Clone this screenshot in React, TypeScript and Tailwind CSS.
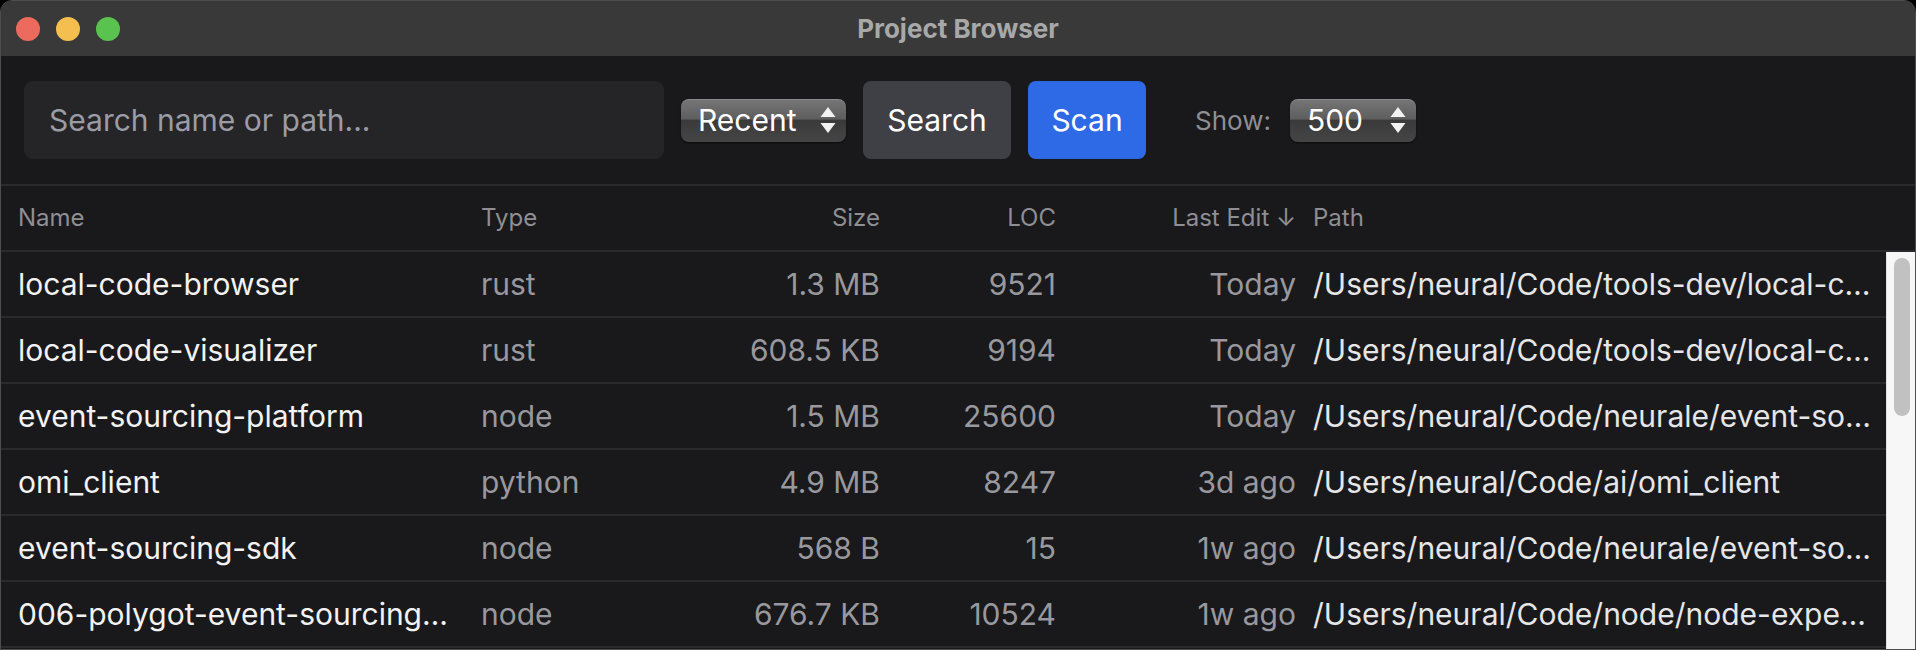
import React from 'react';

type Project = {
  name: string;
  type: string;
  size: string;
  loc: string;
  edited: string;
  path: string;
};

const projects: Project[] = [
  { name: 'local-code-browser', type: 'rust', size: '1.3 MB', loc: '9521', edited: 'Today', path: '/Users/neural/Code/tools-dev/local-code-browser' },
  { name: 'local-code-visualizer', type: 'rust', size: '608.5 KB', loc: '9194', edited: 'Today', path: '/Users/neural/Code/tools-dev/local-code-visualizer' },
  { name: 'event-sourcing-platform', type: 'node', size: '1.5 MB', loc: '25600', edited: 'Today', path: '/Users/neural/Code/neurale/event-sourcing-platform' },
  { name: 'omi_client', type: 'python', size: '4.9 MB', loc: '8247', edited: '3d ago', path: '/Users/neural/Code/ai/omi_client' },
  { name: 'event-sourcing-sdk', type: 'node', size: '568 B', loc: '15', edited: '1w ago', path: '/Users/neural/Code/neurale/event-sourcing-sdk' },
  { name: '006-polygot-event-sourcing-demo', type: 'node', size: '676.7 KB', loc: '10524', edited: '1w ago', path: '/Users/neural/Code/node/node-experiments/006-polygot-event-sourcing-demo' },
  { name: 'dotfiles', type: 'shell', size: '212 KB', loc: '1830', edited: '2w ago', path: '/Users/neural/Code/dotfiles' },
];

const cols = 'grid grid-cols-[446px_232px_150px_159px_223px_558px] gap-x-[17px] px-[17px] items-center';

const Arrows = () => (
  <svg width="16" height="26" viewBox="0 0 16 26" className="shrink-0">
    <path d="M8 0 L15.5 10 L0.5 10 Z" fill="#f2f2f2" />
    <path d="M8 26 L15.5 16 L0.5 16 Z" fill="#f2f2f2" />
  </svg>
);

const PopupSelect: React.FC<{ label: string; width: string }> = ({ label, width }) => (
  <div
    className={`${width} h-[43px] rounded-[8px] flex items-center justify-between pl-[17px] pr-[10px] text-[30px] text-white bg-[linear-gradient(180deg,#767676_0%,#5e5e5e_46%,#3a3a3a_50%,#454545_100%)] shadow-[inset_0_1px_0_rgba(255,255,255,0.15),0_1px_2px_rgba(0,0,0,0.6)]`}
  >
    <span className="leading-none">{label}</span>
    <Arrows />
  </div>
);

export default function App() {
  return (
    <div className="h-[650px] w-full bg-black overflow-hidden font-['Inter',sans-serif]">
      <div className="h-full flex flex-col rounded-t-[12px] border border-[#4d4d4f] overflow-hidden bg-[#19191b]">
        {/* Title bar */}
        <div className="h-[55px] shrink-0 bg-[#393939] relative flex items-center">
          <div className="flex items-center gap-[16px] pl-[15px]">
            <span className="w-[24px] h-[24px] rounded-full bg-[#ed6a5e]" />
            <span className="w-[24px] h-[24px] rounded-full bg-[#f5bf4f]" />
            <span className="w-[24px] h-[24px] rounded-full bg-[#5ac34f]" />
          </div>
          <div className="absolute inset-0 flex items-center justify-center text-[26px] font-bold text-[#a8a8a8] pointer-events-none">
            Project Browser
          </div>
        </div>

        {/* Toolbar */}
        <div className="h-[130px] shrink-0 flex items-center px-[23px] border-b-2 border-[#2a2a2c]">
          <div className="w-[640px] h-[78px] rounded-[9px] bg-[#252528] flex items-center px-[25px] text-[30px] text-[#9a9ca6]">
            Search name or path...
          </div>
          <div className="ml-[17px]">
            <PopupSelect label="Recent" width="w-[165px]" />
          </div>
          <button className="ml-[17px] w-[148px] h-[78px] rounded-[8px] bg-[#3f4046] text-[30px] text-white">Search</button>
          <button className="ml-[17px] w-[118px] h-[78px] rounded-[8px] bg-[#2f6ae6] text-[30px] text-white">Scan</button>
          <span className="ml-[49px] text-[26px] text-[#8e8e93]">Show:</span>
          <div className="ml-[19px]">
            <PopupSelect label="500" width="w-[126px]" />
          </div>
        </div>

        {/* Header */}
        <div className={`${cols} h-[66px] shrink-0 border-b-2 border-[#2a2a2c] text-[24px] text-[#8e8e93]`}>
          <div>Name</div>
          <div>Type</div>
          <div className="text-right">Size</div>
          <div className="text-right">LOC</div>
          <div className="text-right">Last Edit ↓</div>
          <div>Path</div>
        </div>

        {/* Rows + scrollbar */}
        <div className="flex flex-1 min-h-0">
          <div className="flex-1 min-w-0">
            {projects.map((p) => (
              <div key={p.name} className={`${cols} h-[66px] border-b-2 border-[#2a2a2c] text-[30px]`}>
                <div className="min-w-0 pr-[8px]">
                  <div className="truncate text-[#f2f2f2]">{p.name}</div>
                </div>
                <div className="text-[#98989e]">{p.type}</div>
                <div className="text-right text-[#98989e]">{p.size}</div>
                <div className="text-right text-[#98989e]">{p.loc}</div>
                <div className="text-right text-[#98989e]">{p.edited}</div>
                <div className="truncate text-[#e6e6e8]">{p.path}</div>
              </div>
            ))}
          </div>
          <div className="w-[29px] shrink-0 bg-[#f7f7f7] border-l border-[#e2e2e2] pt-[6px] pl-[7px]">
            <div className="w-[16px] h-[158px] rounded-full bg-[#c1c1c1]" />
          </div>
        </div>
      </div>
    </div>
  );
}
